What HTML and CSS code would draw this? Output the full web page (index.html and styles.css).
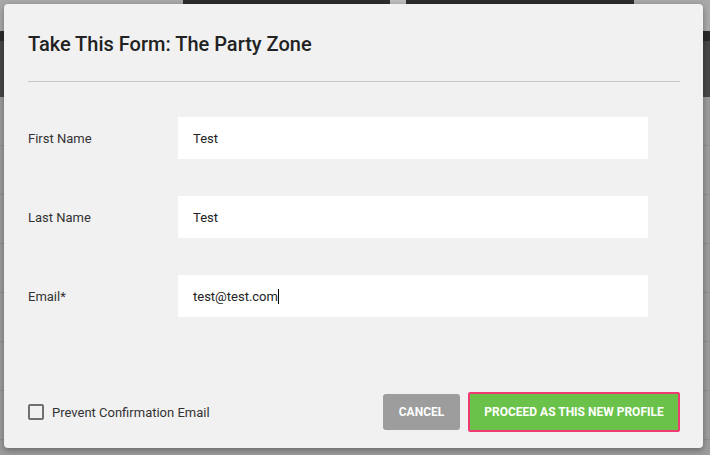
FILE: index.html
```html
<!DOCTYPE html>
<html>
<head>
<meta charset="utf-8">
<link rel="stylesheet" href="styles.css">
</head>
<body>
<div class="page">
  <div class="topbar"><div class="toptab"><span class="tabmark"></span></div></div>
  <div class="band"></div>
  <div class="rows">
    <div class="row"></div><div class="row"></div><div class="row"></div>
    <div class="row"></div><div class="row"></div><div class="row"></div>
    <div class="row"></div>
  </div>
</div>
<div class="modal">
  <div class="modal-header">
    <h1 class="title">Take This Form: The Party Zone</h1>
  </div>
  <div class="form">
    <div class="field">
      <label class="label">First Name</label>
      <div class="input">Test</div>
    </div>
    <div class="field">
      <label class="label">Last Name</label>
      <div class="input">Test</div>
    </div>
    <div class="field">
      <label class="label">Email*</label>
      <div class="input">test@test.com<span class="caret"></span></div>
    </div>
  </div>
  <div class="footer">
    <label class="check"><span class="box"></span>Prevent Confirmation Email</label>
    <div class="actions">
      <button class="btn btn-cancel">CANCEL</button>
      <button class="btn btn-proceed">PROCEED AS THIS NEW PROFILE</button>
    </div>
  </div>
</div>
</body>
</html>
```
FILE: styles.css
```css
html, body {
  margin: 0;
  padding: 0;
}
body {
  width: 710px;
  height: 455px;
  overflow: hidden;
  background: #9c9c9c;
  font-family: Roboto, "Liberation Sans", sans-serif;
  position: relative;
}
.page {
  display: flex;
  flex-direction: column;
}
.topbar {
  height: 31px;
  background: #a9a9a9;
  display: flex;
}
.toptab {
  margin-left: 183px;
  width: 451px;
  height: 31px;
  background: #2d2d2d;
  position: relative;
}
.tabmark {
  position: absolute;
  left: 207px;
  top: 0;
  width: 16px;
  height: 4px;
  background: #bdbdbd;
}
.band {
  height: 66px;
  background: #474747;
  border-top: 10px solid #2b2b2b;
  box-sizing: border-box;
}
.rows {
  display: flex;
  flex-direction: column;
}
.row {
  height: 48px;
  border-bottom: 1px solid #8e8e8e;
}
.modal {
  position: absolute;
  left: 4px;
  top: 4px;
  width: 699px;
  height: 444px;
  box-sizing: border-box;
  background: #f1f1f1;
  border-radius: 4px;
  box-shadow: 0 2px 6px rgba(0,0,0,0.35);
  padding: 0 23px 16px 24px;
  display: flex;
  flex-direction: column;
}
.modal-header {
  padding-top: 28px;
  padding-bottom: 25px;
  border-bottom: 1px solid #c6c6c6;
}
.title {
  margin: 0;
  font-size: 20px;
  line-height: 24px;
  font-weight: 500;
  color: #222;
}
.form {
  display: flex;
  flex-direction: column;
  gap: 37px;
  padding-top: 35px;
}
.field {
  display: flex;
  align-items: center;
}
.label {
  width: 150px;
  font-size: 13px;
  color: #333;
}
.input {
  width: 470px;
  height: 42px;
  box-sizing: border-box;
  background: #fff;
  padding-left: 15px;
  font-size: 13px;
  color: #222;
  display: flex;
  align-items: center;
}
.caret {
  display: inline-block;
  width: 1px;
  height: 15px;
  background: #000;
}
.footer {
  margin-top: auto;
  display: flex;
  align-items: center;
  justify-content: space-between;
}
.check {
  display: flex;
  align-items: center;
  gap: 8px;
  font-size: 13px;
  color: #333;
}
.box {
  width: 16px;
  height: 16px;
  box-sizing: border-box;
  border: 2px solid #6f6f6f;
  border-radius: 2px;
}
.actions {
  display: flex;
  align-items: center;
  gap: 8px;
}
.btn {
  font-family: Roboto, "Liberation Sans", sans-serif;
  font-weight: 700;
  font-size: 12px;
  color: #fff;
  border: none;
  cursor: pointer;
}
.btn-cancel {
  width: 77px;
  height: 36px;
  background: #9d9d9d;
  border-radius: 3px;
}
.btn-proceed {
  width: 212px;
  height: 40px;
  background: #6bc24a;
  border: 2px solid #ef3b72;
  border-radius: 2px;
}
```
